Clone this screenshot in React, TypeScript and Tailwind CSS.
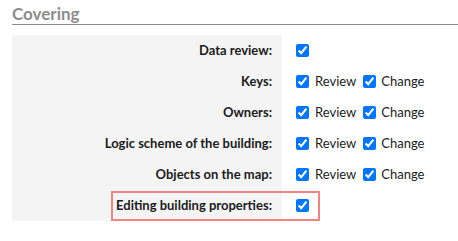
const rows: { label: string; both: boolean; marked?: boolean }[] = [
  { label: "Data review:", both: false },
  { label: "Keys:", both: true },
  { label: "Owners:", both: true },
  { label: "Logic scheme of the building:", both: true },
  { label: "Objects on the map:", both: true },
  { label: "Editing building properties:", both: false, marked: true },
];

function Check() {
  return (
    <input
      type="checkbox"
      checked
      readOnly
      className="m-0 h-[13px] w-[13px] accent-[#0075ff]"
    />
  );
}

export default function App() {
  return (
    <div
      className="h-[241px] w-[458px] bg-white pl-3 text-[13px] text-[#1b1b1b]"
      style={{ fontFamily: "Lato, sans-serif" }}
    >
      <div className="border-b-[1.5px] border-[#8a8a8a] pt-[4px] pb-[1px] text-[17px] font-bold leading-[19px] text-[#8c8c8c]">
        Covering
      </div>
      <div className="mt-[10px] flex flex-col">
        {rows.map((r) => (
          <div key={r.label} className="relative flex h-[31px] items-center">
            <div className="flex h-full w-[270px] items-center justify-end bg-[#f4f4f4] pr-[10px] font-bold">
              {r.label}
            </div>
            <div className="flex items-center pl-[14px] text-[13px]">
              <Check />
              {r.both && (
                <>
                  <span className="ml-[6px] mr-[7px]">Review</span>
                  <Check />
                  <span className="ml-[5px]">Change</span>
                </>
              )}
            </div>
            {r.marked && (
              <div className="pointer-events-none absolute top-[1px] left-[99px] h-[30px] w-[209px] border-2 border-[#f48383]" />
            )}
          </div>
        ))}
      </div>
    </div>
  );
}
